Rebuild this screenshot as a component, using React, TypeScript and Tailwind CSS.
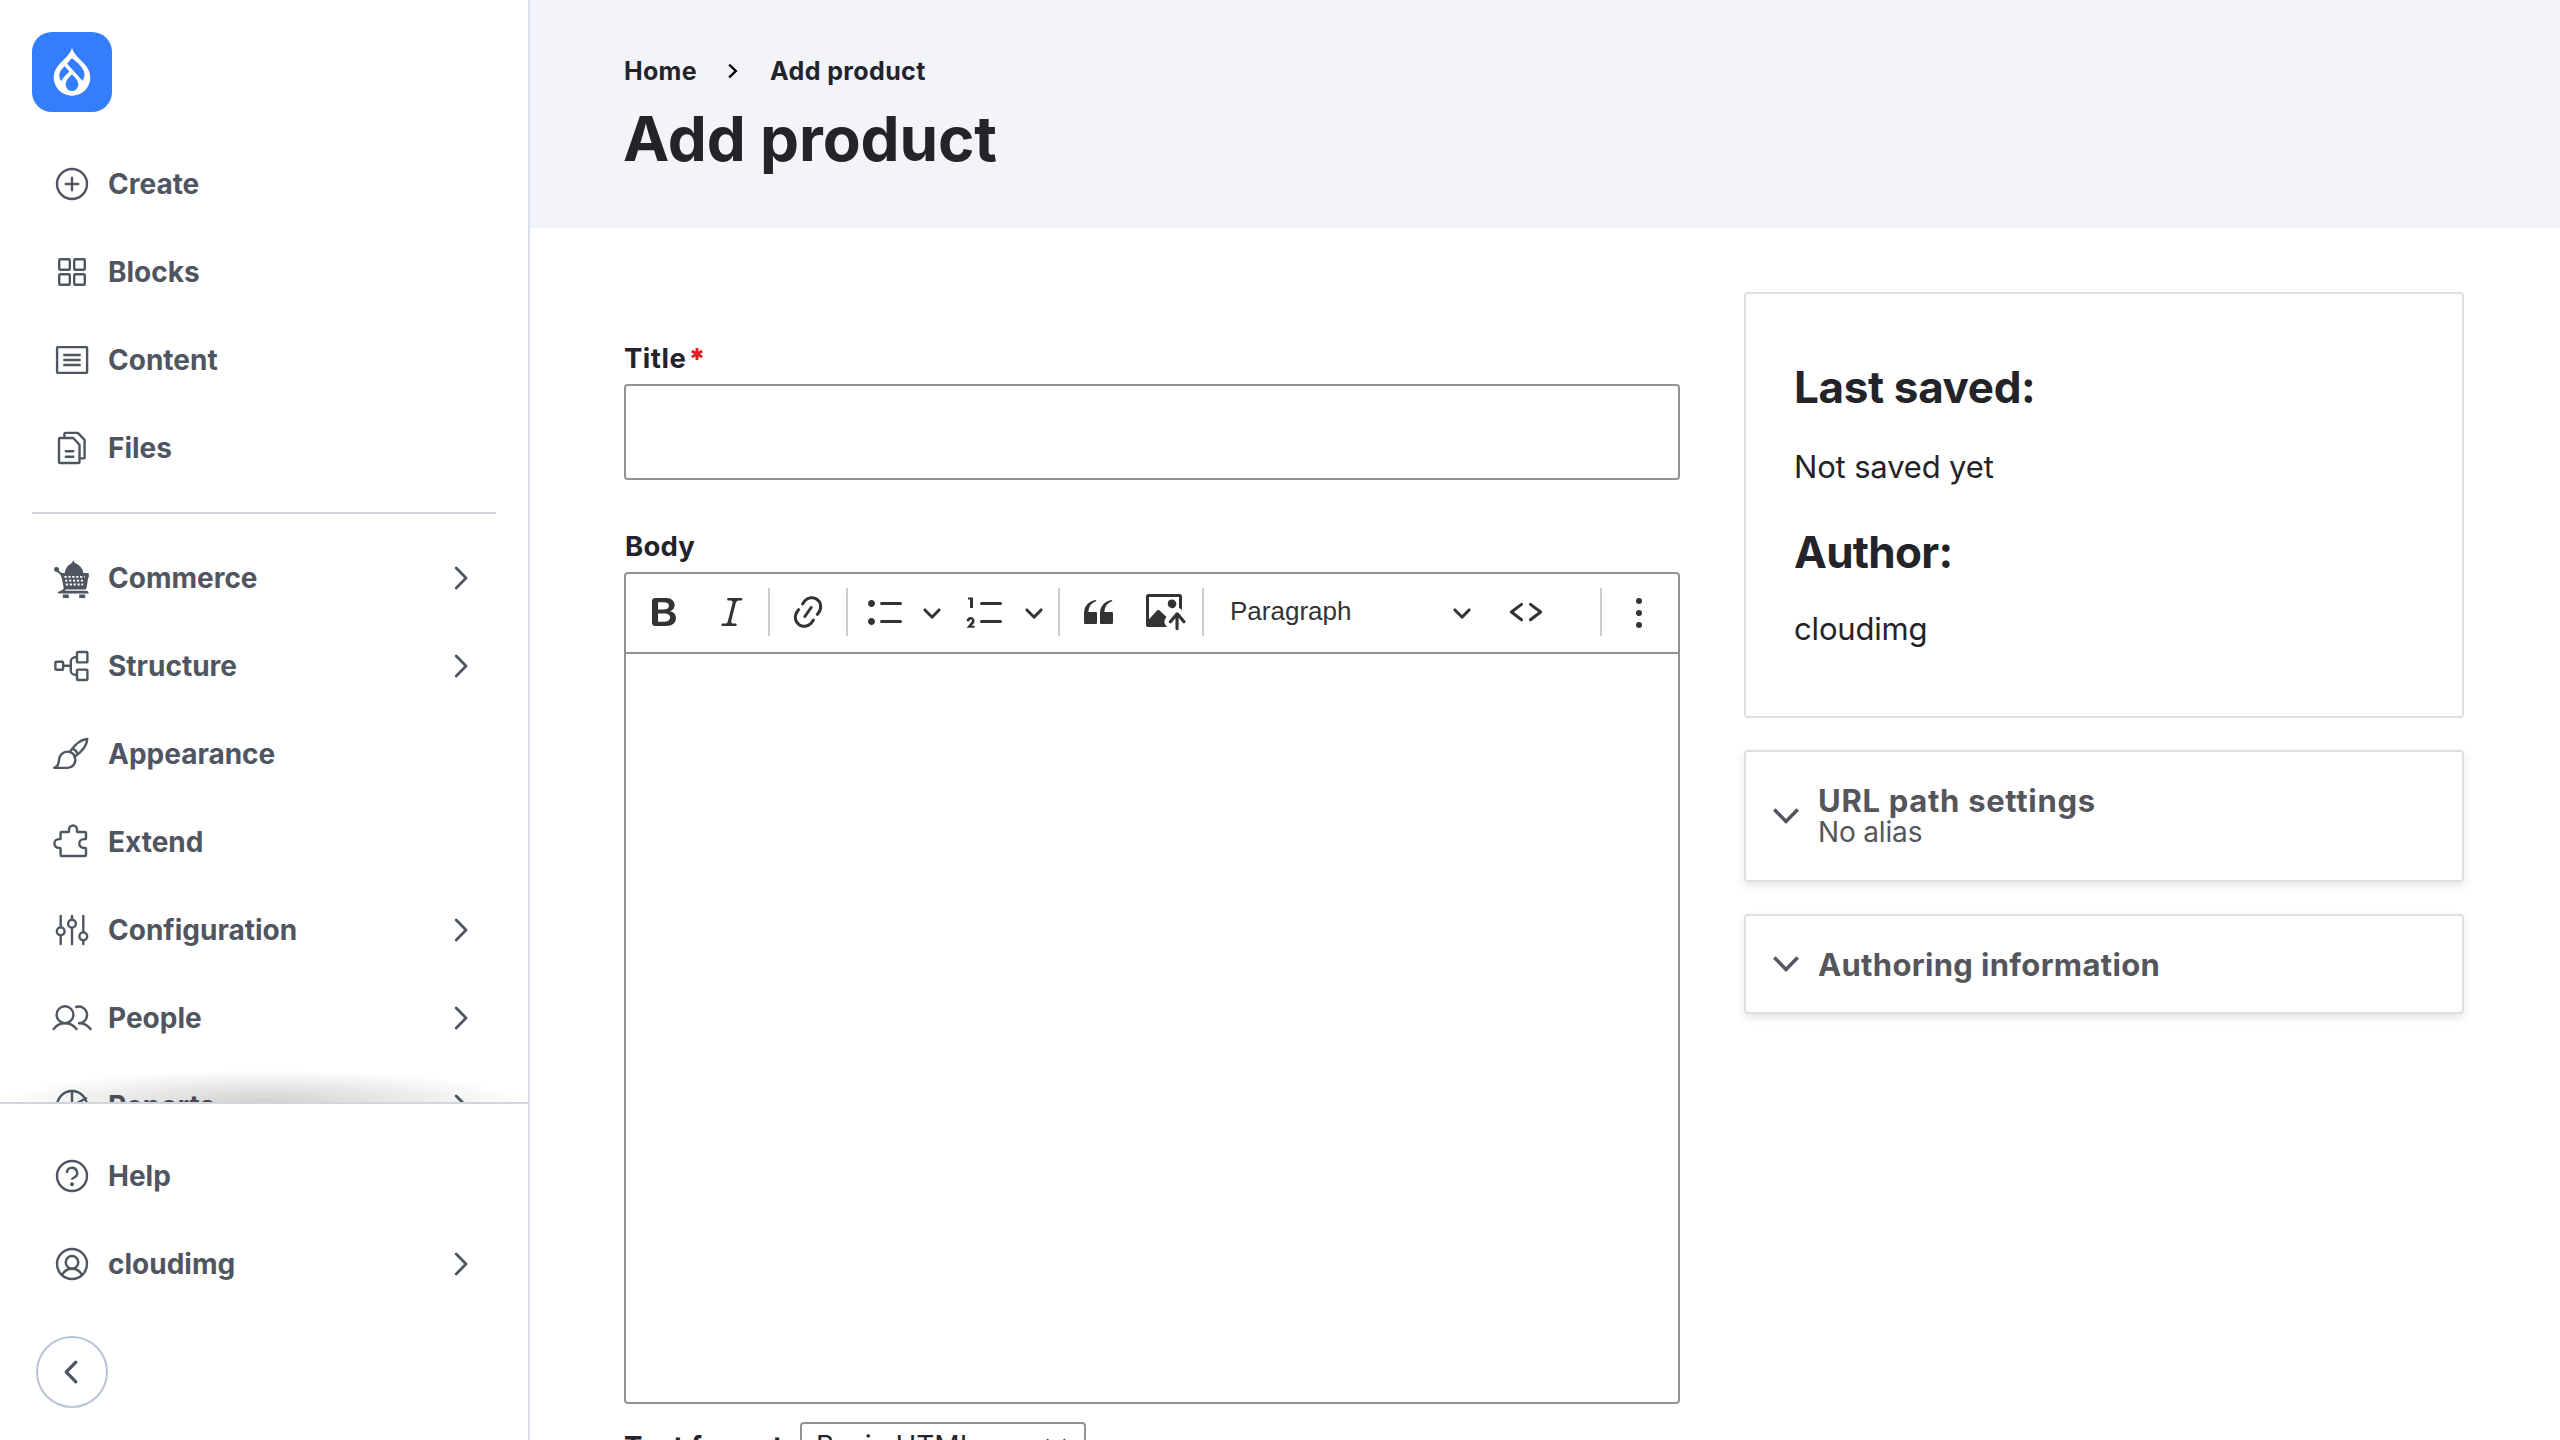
import type { ReactNode } from "react";

type Item = { label: string; icon: ReactNode; expandable?: boolean };

function Line({ children }: { children: ReactNode }) {
  return (
    <svg
      viewBox="0 0 40 40"
      className="size-10 shrink-0"
      fill="none"
      stroke="currentColor"
      strokeWidth="2.4"
      strokeLinecap="round"
      strokeLinejoin="round"
    >
      {children}
    </svg>
  );
}

const primary: Item[] = [
  {
    label: "Create",
    icon: (
      <Line>
        <circle cx="20" cy="20" r="15" />
        <path d="M13.8 20h12.4M20 13.8v12.4" />
      </Line>
    ),
  },
  {
    label: "Blocks",
    icon: (
      <Line>
        <rect x="7.2" y="7.2" width="10.6" height="10.6" rx="1" />
        <rect x="22.2" y="7.2" width="10.6" height="10.6" rx="1" />
        <rect x="7.2" y="22.2" width="10.6" height="10.6" rx="1" />
        <rect x="22.2" y="22.2" width="10.6" height="10.6" rx="1" />
      </Line>
    ),
  },
  {
    label: "Content",
    icon: (
      <Line>
        <rect x="5.1" y="7.1" width="30" height="25.8" rx="0.8" />
        <path d="M12.3 15h15.4M12.3 20h15.4M12.3 25h15.4" />
      </Line>
    ),
  },
  {
    label: "Files",
    icon: (
      <Line>
        <path d="M7 11a1 1 0 0 1 1-1h13.2l6.3 6.8V34a1 1 0 0 1-1 1H8a1 1 0 0 1-1-1z" />
        <path d="M12.4 9.5V5.9a1 1 0 0 1 1-1h12.4l6.800 6.900v17.600a1 1 0 0 1-1 1h-3.600" />
        <path d="M13.9 23.3h7.400M13.900 28.700h7.400" />
      </Line>
    ),
  },
];

const secondary: Item[] = [
  {
    label: "Commerce",
    expandable: true,
    icon: (
      <svg viewBox="0 0 40 40" className="size-10 shrink-0" fill="currentColor">
        <path d="M21.3 2c.5 2.4 2 3.1 4.400 4.600 3 1.900 5.100 4.300 5.700 8.400H12.700c.6-4.100 2.300-6.500 4.800-8.400C19.300 5.200 20.800 4.400 21.300 2z" />
        <path d="M2 11.200a2.500 2.500 0 1 1 4.900.9c.4 1.300 1.500 2.600 3.300 2.900H36c.6 0 .8.5.8 1v3.200c-.1.600-.4.700-.7 1l-1.500 9.300c-.2 1.200-.9 1.900-2 1.900H15c-1.800.3-2 .8-2.200 1.300h21.300c1.800 0 2.300 1.300 2.700 2.800H7.500c-1 0-1.600-.7-2.200-1.500 2-.5 3.700-1.300 5.500-2.600.6-.4 1-.9.900-1.700L9.600 19.400c-.5-1.500-1.300-2.700-2.400-3.800L5 14C3.200 13.800 2 12.800 2 11.200z" />
        <path d="M10.800 36.400h6V40h-6zM27.200 36.400h6V40h-6z" />
        <path
          stroke="#fff"
          strokeWidth="1.800"
          strokeDasharray="2.200 1.700"
          d="M12.500 18.900h20.200M13.200 22.700h18.600M13.800 26.500h17.400"
        />
      </svg>
    ),
  },
  {
    label: "Structure",
    expandable: true,
    icon: (
      <Line>
        <rect x="3.400" y="15.800" width="7.700" height="8" rx="1" />
        <rect x="25" y="6" width="10.400" height="10.400" rx="1" />
        <rect x="25" y="23.600" width="10.400" height="10.400" rx="1" />
        <path d="M11.100 19.800h7.700M25 11.200h-1.800a4.400 4.400 0 0 0-4.400 4.400v8.800a4.400 4.400 0 0 0 4.400 4.400H25" />
      </Line>
    ),
  },
  {
    label: "Appearance",
    icon: (
      <Line>
        <path d="M2.200 33.900h13.500a7.900 7.900 0 0 0 7.600-8.300c0-4.500-3.200-8-7.500-8-5.300 0-8.500 3.800-8.800 8.300-.2 3.600-.8 6.700-4.800 8z" />
        <path d="M17.800 17.900c4.500-6.600 10.500-12.600 17.500-12.900-.3 6.800-6.200 13.200-12.700 17.800M20.800 14.600c2.100 1 3.700 2.600 4.600 4.800" />
      </Line>
    ),
  },
  {
    label: "Extend",
    icon: (
      <Line>
        <path d="M9.600 10h6.800c.5 0 .7-.3.600-.8v-1.700a4 4 0 0 1 8 0v1.700c-.1.500.1.800.6.800h7.400a1 1 0 0 1 1 1v5.400c0 .5-.3.700-.8.700h-1.500a4.400 4.400 0 0 0 0 8.800h1.500c.5 0 .8.200.8.700V33a1 1 0 0 1-1 1H9.600a1 1 0 0 1-1-1v-6.400c0-.5-.3-.7-.8-.7h-1a4.400 4.400 0 0 1 0-8.800h1c.5 0 .8-.2.800-.7V11a1 1 0 0 1 1-1z" />
      </Line>
    ),
  },
  {
    label: "Configuration",
    expandable: true,
    icon: (
      <Line>
        <path d="M8.700 6v11.200M8.700 25.400V34M20 6v3.600M20 17.800V34M31.300 6v16.200M31.300 30.400V34" />
        <circle cx="8.700" cy="21.300" r="3.900" />
        <circle cx="20" cy="13.700" r="3.900" />
        <circle cx="31.300" cy="26.300" r="3.900" />
      </Line>
    ),
  },
  {
    label: "People",
    expandable: true,
    icon: (
      <Line>
        <circle cx="13" cy="16.700" r="8.400" />
        <path d="M1.600 31.100c3-4 6.900-5.900 11.400-5.900s8.500 2 11.500 5.900" />
        <path d="M24.200 9a8.300 8.300 0 1 1 2.800 16.200c4.700 0 8.600 2 11.600 5.900" />
      </Line>
    ),
  },
  {
    label: "Reports",
    expandable: true,
    icon: (
      <Line>
        <circle cx="20" cy="20" r="15" />
        <path d="M20 5v15M20 20l14-7.800" />
      </Line>
    ),
  },
];

const footer: Item[] = [
  {
    label: "Help",
    icon: (
      <Line>
        <circle cx="20" cy="20" r="15" />
        <path d="M14.900 17a5.100 5.100 0 1 1 7.700 4.300c-1.700 1-2.600 1.200-2.600 2.500" strokeLinecap="butt" />
        <circle cx="20" cy="28.200" r="2" fill="currentColor" stroke="none" />
      </Line>
    ),
  },
  {
    label: "cloudimg",
    expandable: true,
    icon: (
      <Line>
        <circle cx="20" cy="20" r="15" />
        <circle cx="20" cy="18.300" r="6.300" />
        <path d="M9.900 31c2.200-4 5.700-6.200 10.100-6.200s7.900 2.200 10.100 6.200" />
      </Line>
    ),
  },
];

function NavItem({ item }: { item: Item }) {
  return (
    <li className="flex h-[88px] items-center pl-[52px] pr-[57px]">
      {item.icon}
      <span className="ml-4 grow text-[28px] font-bold leading-10">{item.label}</span>
      {item.expandable && (
        <svg
          viewBox="0 0 20 28"
          className="h-7 w-5 shrink-0"
          fill="none"
          stroke="currentColor"
          strokeWidth="2.800"
          strokeLinecap="round"
          strokeLinejoin="round"
        >
          <path d="M5.200 4 15 14 5.200 24" />
        </svg>
      )}
    </li>
  );
}

function Logo() {
  return (
    <div className="size-20 rounded-[20px] bg-[#347efe]">
      <svg viewBox="0 0 80 80" className="size-20">
        <path
          fill="#fff"
          fillRule="evenodd"
          d="M40 16c1.300 4.800 4.700 8 8.300 11.700C53.300 32.700 58.300 37.600 58.300 45.500A18.300 18.300 0 0 1 40 63.700 18.300 18.300 0 0 1 21.700 45.500c0-7.900 5-12.800 10-17.800C35.300 24 38.700 20.800 40 16z
             M40 26.300c-1.900 1.800-3.600 3.400-4.800 5.500L50.300 48.800c4-5.300 2.600-10.700-4-17.200-2.200-2.200-4.300-3.700-6.300-5.300z
             M32.700 34.300c-5.400 4.500-7.100 9.800-3.400 14.900 1.700-3.900 5.100-6.400 8.100-9.600z
             M40 42.300c-2.900 3.200-6.300 6-6.300 10.300a6.300 6.500 0 0 0 12.600 0c0-4.300-3.400-7.100-6.300-10.300z"
        />
      </svg>
    </div>
  );
}

function Sidebar() {
  return (
    <aside className="flex h-[1440px] w-[530px] shrink-0 flex-col border-r-2 border-[#dadfec] bg-white text-[#505661]">
      <div className="relative h-[1102px] overflow-hidden">
        <div className="px-8 pt-8">
          <Logo />
        </div>
        <ul className="mt-7">
          {primary.map((i) => (
            <NavItem key={i.label} item={i} />
          ))}
        </ul>
        <hr className="mx-8 mt-5 border-t-2 border-[#d0d5de]" />
        <ul className="mt-5">
          {secondary.map((i) => (
            <NavItem key={i.label} item={i} />
          ))}
        </ul>
        <div className="absolute inset-x-0 bottom-0 h-8 bg-[radial-gradient(farthest-side_at_50%_100%,rgba(0,0,0,0.18),transparent)]" />
      </div>
      <div className="grow border-t-2 border-[#d0d5de] pt-7">
        <ul>
          {footer.map((i) => (
            <NavItem key={i.label} item={i} />
          ))}
        </ul>
        <button className="ml-9 mt-7 flex size-[72px] items-center justify-center rounded-full border-2 border-[#b9c3d5]">
          <svg
            viewBox="0 0 28 28"
            className="size-7"
            fill="none"
            stroke="currentColor"
            strokeWidth="3.200"
            strokeLinecap="round"
            strokeLinejoin="round"
          >
            <path d="M17.900 4.200 8.200 14l9.700 9.800" />
          </svg>
        </button>
      </div>
    </aside>
  );
}

function Tool({ d, className }: { d: string; className: string }) {
  return (
    <svg viewBox="0 0 20 20" className={`size-10 shrink-0 ${className}`} fill="currentColor">
      <path d={d} />
    </svg>
  );
}

function Caret({ className }: { className: string }) {
  return (
    <svg viewBox="0 0 10 10" className={`size-5 shrink-0 ${className}`} fill="currentColor">
      <path d="M.941 4.523a.75.75 0 1 1 1.060-1.060l3.006 3.005 3.005-3.005a.75.75 0 1 1 1.060 1.060l-3.549 3.550a.75.75 0 0 1-1.168-.136L.941 4.523z" />
    </svg>
  );
}

function Sep({ className }: { className: string }) {
  return <span className={`h-12 w-0.5 shrink-0 bg-[#ccced1] ${className}`} />;
}

function Toolbar() {
  return (
    <div className="flex h-20 items-center border-b-2 border-[#919297] pb-0.5 text-[#333333]">
      <Tool
        className="ml-[18px]"
        d="M10.187 17H5.773c-.637 0-1.092-.138-1.364-.415-.273-.277-.409-.718-.409-1.323V4.738c0-.617.14-1.062.419-1.332.279-.27.73-.406 1.354-.406h4.680c.69 0 1.288.041 1.793.124.506.083.96.242 1.360.478.341.197.644.447.906.75a3.262 3.262 0 0 1 .808 2.162c0 1.401-.722 2.426-2.167 3.075C15.050 10.175 16 11.315 16 13.010a3.756 3.756 0 0 1-2.296 3.504 6.100 6.100 0 0 1-1.517.377c-.571.073-1.238.11-2 .11zm-.217-6.217H7v4.087h3.069c1.977 0 2.965-.69 2.965-2.072 0-.707-.256-1.220-.768-1.537-.512-.319-1.277-.478-2.296-.478zM7 5.130v3.619h2.606c.729 0 1.292-.067 1.690-.2a1.600 1.600 0 0 0 .91-.765c.165-.267.247-.566.247-.897 0-.707-.26-1.176-.778-1.409-.519-.232-1.310-.348-2.375-.348H7z"
      />
      <Tool
        className="ml-7"
        d="m9.586 14.633.021.004c-.036.335.095.655.393.962.082.083.173.15.274.201h1.474a.6.6 0 1 1 0 1.200H5.304a.6.6 0 0 1 0-1.200h1.150c.474-.07.809-.182 1.005-.334.157-.122.291-.32.404-.597l2.416-9.550a1.053 1.053 0 0 0-.281-.823 1.120 1.120 0 0 0-.442-.296H8.150a.6.6 0 0 1 0-1.200h6.443a.6.6 0 1 1 0 1.200h-1.195c-.376.056-.65.155-.823.296-.215.175-.423.439-.623.79l-2.366 9.347z"
      />
      <Sep className="ml-4" />
      <Tool
        className="ml-[18px]"
        d="m11.077 15 .991-1.416a.75.75 0 1 1 1.229.86l-1.148 1.640a.748.748 0 0 1-.217.206 5.251 5.251 0 0 1-8.503-5.955.741.741 0 0 1 .12-.274l1.147-1.639a.75.75 0 1 1 1.228.86L4.933 10.700l.006.003a3.750 3.750 0 0 0 6.132 4.294l.006.004zm5.494-5.335a.748.748 0 0 1-.12.274l-1.147 1.639a.75.75 0 1 1-1.228-.86l.86-1.230a3.750 3.750 0 0 0-6.144-4.301l-.86 1.229a.75.75 0 0 1-1.229-.86l1.148-1.640a.748.748 0 0 1 .217-.206 5.251 5.251 0 0 1 8.503 5.955zm-4.563-2.532a.75.75 0 0 1 .184 1.045l-3.155 4.505a.75.75 0 1 1-1.229-.86l3.155-4.506a.75.75 0 0 1 1.045-.184z"
      />
      <Sep className="ml-[18px]" />
      <Tool
        className="ml-[18px]"
        d="M7 5.750c0 .414.336.75.75.75h9.500a.75.75 0 1 0 0-1.500h-9.500a.75.75 0 0 0-.75.75zm-6 0C1 4.784 1.777 4 2.750 4c.966 0 1.750.777 1.750 1.750 0 .966-.777 1.750-1.750 1.750C1.784 7.500 1 6.723 1 5.750zm6 9c0 .414.336.75.75.75h9.500a.75.75 0 1 0 0-1.500h-9.500a.75.75 0 0 0-.75.75zm-6 0c0-.966.777-1.750 1.750-1.750.966 0 1.750.777 1.750 1.750 0 .966-.777 1.750-1.750 1.750-.966 0-1.750-.777-1.750-1.750z"
      />
      <Caret className="ml-4" />
      <Tool
        className="ml-6"
        d="M7 5.750c0 .414.336.75.75.75h9.500a.75.75 0 1 0 0-1.500h-9.500a.75.75 0 0 0-.75.75zM3.500 3v5H2V3.700H1v-1h2.500V3zM.343 17.857l2.590-3.257H2.920a.6.6 0 1 0-1.040 0H.302a2 2 0 1 1 3.995 0h-.001c-.048.405-.16.734-.333.988-.175.254-.59.692-1.244 1.312H4.300v1h-4l.043-.043zM7 14.750a.75.75 0 0 1 .75-.75h9.500a.75.75 0 1 1 0 1.500h-9.500a.75.75 0 0 1-.75-.75z"
      />
      <Caret className="ml-[18px]" />
      <Sep className="ml-[14px]" />
      <Tool
        className="ml-[18px]"
        d="M3 10.423a6.500 6.500 0 0 1 6.056-6.408l.038.67C6.448 5.423 5.354 7.663 5.220 10H9c.552 0 .5.432.5.986v4.511c0 .554-.448.503-1 .503h-5c-.552 0-.5-.449-.5-1.003v-4.574zm8 0a6.500 6.500 0 0 1 6.056-6.408l.038.67c-2.646.739-3.740 2.979-3.873 5.315H17c.552 0 .5.432.5.986v4.511c0 .554-.448.503-1 .503h-5c-.552 0-.5-.449-.5-1.003v-4.574z"
      />
      <Tool
        className="ml-7"
        d="M1.201 1C.538 1 0 1.470 0 2.100v14.363c0 .64.534 1.037 1.186 1.037h9.494a2.970 2.970 0 0 1-.414-.287 2.998 2.998 0 0 1-1.055-2.030 3.003 3.003 0 0 1 .693-2.185l.383-.455-.02.018-3.650-3.410a.695.695 0 0 0-.957-.034L1.500 13.600V2.500h15v5.535a2.970 2.970 0 0 1 1.412.932l.088.105V2.100c0-.63-.547-1.100-1.200-1.100H1.202Zm11.713 2.803a2.146 2.146 0 0 0-2.049 1.992 2.140 2.140 0 0 0 1.280 2.096 2.130 2.130 0 0 0 2.644-3.110 2.134 2.134 0 0 0-1.875-.978ZM15.522 19.100a.79.79 0 0 0 .79-.79v-5.373l2.059 2.455a.79.79 0 1 0 1.211-1.015l-3.352-3.995a.79.79 0 0 0-.995-.179.784.784 0 0 0-.299.221l-3.350 3.990a.79.79 0 1 0 1.210 1.017l1.936-2.306v5.185c0 .436.353.79.79.79Z"
      />
      <Sep className="ml-4" />
      <span className="mb-0.5 ml-[26px] w-[223px] font-['Liberation_Sans',sans-serif] text-[26px] leading-10">
        Paragraph
      </span>
      <Caret className="-ml-[1px]" />
      <svg
        viewBox="0 0 40 40"
        className="ml-[34px] size-10 shrink-0"
        fill="none"
        stroke="currentColor"
        strokeWidth="3"
        strokeLinecap="round"
        strokeLinejoin="round"
      >
        <path d="M15.500 12.400 5.400 20l10.100 7.800M24.500 12.400 34.600 20l-10.100 7.800" />
      </svg>
      <Sep className="ml-[54px]" />
      <svg viewBox="0 0 20 20" className="ml-[18px] size-10 shrink-0" fill="currentColor">
        <circle cx="9.500" cy="4.500" r="1.500" />
        <circle cx="9.500" cy="10.500" r="1.500" />
        <circle cx="9.500" cy="16.500" r="1.500" />
      </svg>
    </div>
  );
}

function DetailsChevron() {
  return (
    <svg viewBox="0 0 26 16" className="ml-[27px] h-4 w-[26px] shrink-0" fill="none" stroke="#545560" strokeWidth="3.600">
      <path d="M1.300 1.500 13 13.400 24.700 1.500" />
    </svg>
  );
}

export default function App() {
  return (
    <div className="flex h-[1440px] w-[2560px] overflow-hidden bg-white font-['Inter',sans-serif] text-[#232429]">
      <Sidebar />
      <div className="flex grow flex-col">
        <header className="h-[228px] shrink-0 bg-[#f3f4f9] pl-[94px] pt-[51px]">
          <nav className="flex h-10 items-center text-[25px] font-bold leading-10">
            <span className="w-[104px] tracking-[0.3px]">Home</span>
            <svg viewBox="0 0 10 16" className="h-4 w-2.5" fill="none" stroke="#000" strokeWidth="2.400">
              <path d="M1.200 1.700 7.800 8l-6.600 6.300" />
            </svg>
            <span className="ml-8 tracking-[0.4px]">Add product</span>
          </nav>
          <h1 className="-ml-px mt-2 text-[62px] font-bold leading-[80px] tracking-[-0.15px]">Add product</h1>
        </header>
        <main className="flex items-start pl-[94px]">
          <form className="w-[1056px] shrink-0 pt-[110px]">
            <label className="flex h-10 text-[27.500px] font-bold leading-10 tracking-[0.5px]">
              Title
              <svg viewBox="0 0 12 12" className="ml-[5px] mt-[10px] size-3" stroke="#dc2323" strokeWidth="3">
                <path d="M6 0v12M.8 3l10.400 6M11.200 3 .8 9" />
              </svg>
            </label>
            <input className="mt-1.5 block h-24 w-full rounded border-2 border-[#919297]" />
            <label className="mt-[46px] block h-10 pl-px text-[27.500px] font-bold leading-10 tracking-[0.2px]">
              Body
            </label>
            <div className="mt-1.5 h-[832px] rounded border-2 border-[#919297]">
              <Toolbar />
            </div>
            <div className="mt-[18px] flex">
              <span className="mt-1 w-44 text-[27.500px] font-bold leading-10 tracking-[0.4px]">Text format</span>
              <div className="flex h-12 w-[286px] items-center justify-between rounded border-2 border-[#919297] pl-[14px] pr-[17px] text-[28px] leading-10">
                Basic HTML
                <svg viewBox="0 0 22 14" className="mb-0.5 h-[14px] w-[22px]" fill="none" stroke="#545560" strokeWidth="3">
                  <path d="M1.500 1.500 11 11l9.500-9.500" />
                </svg>
              </div>
            </div>
          </form>
          <aside className="ml-16 flex w-[720px] shrink-0 flex-col pt-16">
            <section className="h-[426px] rounded border-2 border-[#dedfe4] pl-12 pt-[65px]">
              <h3 className="text-[44px] font-bold leading-[56px] tracking-[-0.35px]">Last saved:</h3>
              <p className="mt-7 text-[31px] leading-[48px] tracking-[-0.16px]">Not saved yet</p>
              <h3 className="mt-[33px] text-[44px] font-bold leading-[56px] tracking-[-0.7px]">Author:</h3>
              <p className="mt-[25px] text-[31px] leading-[48px] tracking-[-0.17px]">cloudimg</p>
            </section>
            <section className="mt-8 flex h-[132px] items-center rounded border-2 border-[#dedfe4] text-[#55565b] shadow-[0_4px_8px_rgba(0,0,0,0.1)]">
              <DetailsChevron />
              <div className="ml-[19px] pt-px">
                <h4 className="text-[31px] font-bold leading-8 tracking-[0.7px]">URL path settings</h4>
                <p className="text-[28px] leading-[31px] tracking-[-0.16px]">No alias</p>
              </div>
            </section>
            <section className="mt-8 flex h-[100px] items-center rounded border-2 border-[#dedfe4] text-[#55565b] shadow-[0_4px_8px_rgba(0,0,0,0.1)]">
              <DetailsChevron />
              <h4 className="ml-[19px] pt-0.5 text-[31px] font-bold leading-8 tracking-[0.33px]">
                Authoring information
              </h4>
            </section>
          </aside>
        </main>
      </div>
    </div>
  );
}
